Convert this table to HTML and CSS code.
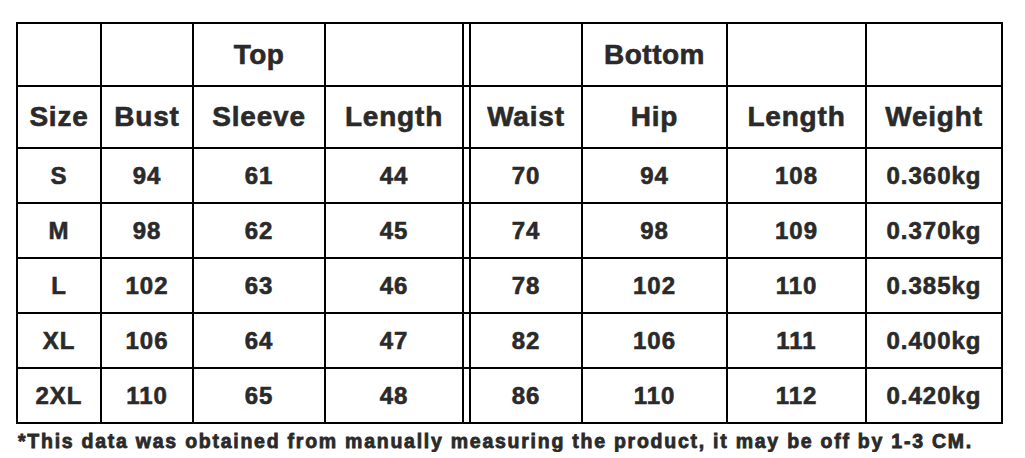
FILE: index.html
```html
<!DOCTYPE html>
<html>
<head>
<meta charset="utf-8">
<link rel="stylesheet" href="styles.css">
</head>
<body>
<div class="page">
<table class="sizes">
  <colgroup>
    <col class="c-size"><col class="c-bust"><col class="c-sleeve"><col class="c-len1"><col class="c-gap"><col class="c-waist"><col class="c-hip"><col class="c-len2"><col class="c-weight">
  </colgroup>
  <tr class="group">
    <td></td><td></td><td>Top</td><td></td><td class="gap"></td><td></td><td>Bottom</td><td></td><td></td>
  </tr>
  <tr class="head">
    <td>Size</td><td>Bust</td><td>Sleeve</td><td>Length</td><td class="gap"></td><td>Waist</td><td>Hip</td><td>Length</td><td>Weight</td>
  </tr>
  <tr class="row">
    <td>S</td><td>94</td><td>61</td><td>44</td><td class="gap"></td><td>70</td><td>94</td><td>108</td><td>0.360kg</td>
  </tr>
  <tr class="row">
    <td>M</td><td>98</td><td>62</td><td>45</td><td class="gap"></td><td>74</td><td>98</td><td>109</td><td>0.370kg</td>
  </tr>
  <tr class="row">
    <td>L</td><td>102</td><td>63</td><td>46</td><td class="gap"></td><td>78</td><td>102</td><td>110</td><td>0.385kg</td>
  </tr>
  <tr class="row">
    <td>XL</td><td>106</td><td>64</td><td>47</td><td class="gap"></td><td>82</td><td>106</td><td>111</td><td>0.400kg</td>
  </tr>
  <tr class="row">
    <td>2XL</td><td>110</td><td>65</td><td>48</td><td class="gap"></td><td>86</td><td>110</td><td>112</td><td>0.420kg</td>
  </tr>
</table>
<p class="note">*This data was obtained from manually measuring the product, it may be off by 1-3 CM.</p>
</div>
</body>
</html>
```

FILE: styles.css
```css
html, body {
  margin: 0;
  padding: 0;
  background: #ffffff;
}
.page {
  padding: 22px 0 0 16px;
  font-family: "Liberation Sans", Arial, sans-serif;
  font-weight: bold;
  color: #2a2a2a;
  -webkit-text-stroke: 0.6px #2a2a2a;
}
.sizes {
  border-collapse: collapse;
  table-layout: fixed;
  width: 987px;
  border: 2px solid #000;
}
.sizes td {
  border: 2px solid #000;
  padding: 0;
  text-align: center;
  vertical-align: middle;
  white-space: nowrap;
}
.c-size { width: 84px; }
.c-bust { width: 92px; }
.c-sleeve { width: 132px; }
.c-len1 { width: 138px; }
.c-gap { width: 7px; }
.c-waist { width: 112px; }
.c-hip { width: 145px; }
.c-len2 { width: 139px; }
.c-weight { width: 136px; }
.group td {
  height: 61px;
  font-size: 28px;
  letter-spacing: 0.5px;
}
.head td {
  height: 60px;
  font-size: 28px;
  letter-spacing: 0.8px;
}
.row td {
  height: 53px;
  font-size: 24px;
  letter-spacing: 1px;
}
.note {
  margin: 6px 0 0 2px;
  font-size: 19.5px;
  line-height: 22px;
  color: #2a2a2a;
  letter-spacing: 1.75px;
  white-space: nowrap;
  -webkit-text-stroke: 0.8px #2a2a2a;
}
```
